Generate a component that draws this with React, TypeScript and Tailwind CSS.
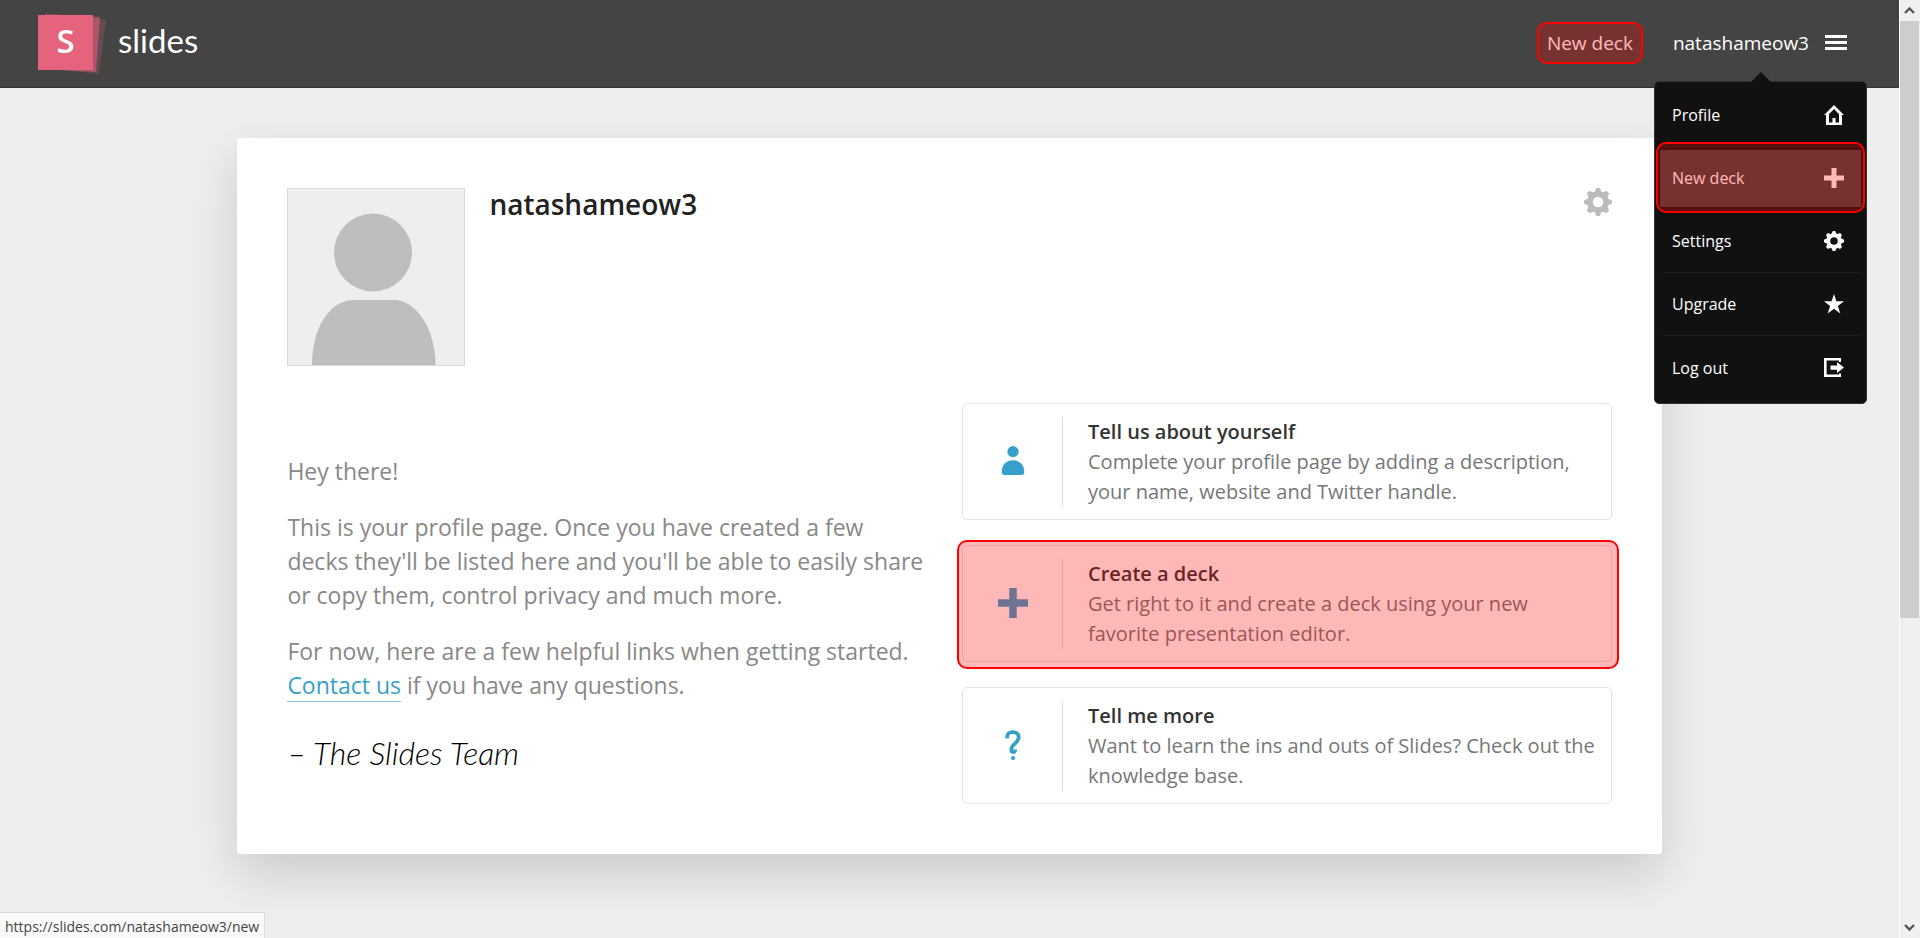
import React from 'react';

type IconProps = { className?: string };

const TEETH = [0, 45, 90, 135, 180, 225, 270, 315];

function Gear({ className }: IconProps) {
  return (
    <svg viewBox="0 0 28 28" className={className} fill="currentColor" aria-hidden="true">
      <circle cx="14" cy="14" r="8" fill="none" stroke="currentColor" strokeWidth="5.4" />
      {TEETH.map((a) => (
        <path key={a} d="M9.4 5.5 Q11.2 3.6 11.7 1.2 Q12 0 13 0 H15 Q16 0 16.3 1.2 Q16.8 3.6 18.6 5.5 Z" transform={`rotate(${a} 14 14)`} />
      ))}
    </svg>
  );
}

function Home({ className }: IconProps) {
  return (
    <svg viewBox="0 0 20 20" className={className} fill="currentColor" fillRule="evenodd" aria-hidden="true">
      <path d="M10 0 L20 10 H18 V20 H2 V10 H0 Z M10 4 L5 9 V17.5 H8.5 V13 H11.5 V17.5 H15 V9 Z" />
    </svg>
  );
}

function Plus({ className }: IconProps) {
  return (
    <svg viewBox="0 0 20 20" className={className} fill="currentColor" aria-hidden="true">
      <path d="M7.5 0 H12.5 V7.5 H20 V12.5 H12.5 V20 H7.5 V12.5 H0 V7.5 H7.5 Z" />
    </svg>
  );
}

function Star({ className }: IconProps) {
  return (
    <svg viewBox="0 0 20 20" className={className} fill="currentColor" aria-hidden="true">
      <path d="M10 0 L12.4 7.3 H20 L13.9 11.9 L16.3 19.4 L10 14.8 L3.7 19.4 L6.1 11.9 L0 7.3 H7.6 Z" />
    </svg>
  );
}

function Exit({ className }: IconProps) {
  return (
    <svg viewBox="0 0 20 20" className={className} fill="currentColor" aria-hidden="true">
      <path d="M0 0 H17 V4 H15 V2.6 H2.6 V16.6 H15 V15.5 H17 V19 H0 Z M6.5 7.4 H13 V4 L20 9.6 L13 15 V11.8 H6.5 Z" />
    </svg>
  );
}

function Person({ className }: IconProps) {
  return (
    <svg viewBox="0 0 32 32" className={className} fill="currentColor" aria-hidden="true">
      <circle cx="16" cy="6" r="6" />
      <path d="M4 27.5 C4 20 9 15.3 16 15.3 C23 15.3 28 20 28 27.5 Q28 31 25 31 H7 Q4 31 4 27.5 Z" />
    </svg>
  );
}

function Question({ className }: IconProps) {
  return (
    <svg viewBox="0 0 32 32" className={className} aria-hidden="true">
      <path
        d="M10 9 C9 4 12 2.2 16 2.2 C20.5 2.2 22.5 5.2 22 8.6 C21.2 14 14.6 15.4 14.2 20.4 C14 24.5 18.4 24.6 18.4 20.8"
        fill="none"
        stroke="currentColor"
        strokeWidth="4"
      />
      <circle cx="16" cy="29.8" r="2.2" fill="currentColor" />
    </svg>
  );
}

function Logo() {
  return (
    <a href="#home" className="flex items-center gap-3 text-white">
      <span className="relative flex h-14 w-[68px] items-center pb-1">
        <svg viewBox="0 0 68 60" className="absolute -top-px left-0 h-[60px] w-[68px]" fill="#e5637d" aria-hidden="true">
          <path d="M14 0 L68 6 L61 60 L7 54 Z" opacity="0.22" />
          <path d="M7 0 L62 3 L58 58 L3 55 Z" opacity="0.55" />
          <rect x="0" y="1" width="55" height="55" />
        </svg>
        <span className="relative w-[55px] text-center text-[33px] leading-none font-semibold">S</span>
      </span>
      <span className="pb-1 font-['Lato'] text-[33px] leading-none">slides</span>
    </a>
  );
}

function Highlight({ className }: IconProps) {
  return (
    <span
      aria-hidden="true"
      className={`pointer-events-none absolute rounded-[10px] border-2 border-[#ff0000] bg-[#ff0000]/28 ${className ?? ''}`}
    />
  );
}

const MENU = [
  { label: 'Profile', Icon: Home },
  { label: 'New deck', Icon: Plus, active: true },
  { label: 'Settings', Icon: Gear },
  { label: 'Upgrade', Icon: Star },
  { label: 'Log out', Icon: Exit },
];

function UserMenu() {
  return (
    <div className="absolute top-[53px] -right-5 z-10 w-[213px] rounded-[5px] border border-[#333] bg-[#111] px-[5px] pt-[2px] pb-1">
      <svg viewBox="0 0 20 10" className="absolute -top-[10px] left-1/2 h-[10px] w-5 -translate-x-1/2" fill="#111" aria-hidden="true">
        <path d="M10 0 L20 10 H0 Z" />
      </svg>
      <ul>
        {MENU.map(({ label, Icon, active }, i) => (
          <li key={label} className={`relative h-[63px] pt-[3px] pb-[2px] ${i < MENU.length - 1 ? 'border-b border-[#1c1c1c]' : ''}`}>
            <a
              href={`#${label}`}
              className={`flex h-full items-center justify-between pr-[17px] pl-3 text-[16px] text-white ${active ? 'bg-[#444]' : ''}`}
            >
              {label}
              <Icon className="size-5" />
            </a>
            {active && <Highlight className="-inset-x-1 -top-[5px] -bottom-1" />}
          </li>
        ))}
      </ul>
    </div>
  );
}

function Header() {
  return (
    <header className="flex h-[88px] shrink-0 items-center justify-between border-b border-[#333] bg-[#444] pr-[52px] pb-[2px] pl-[38px]">
      <Logo />
      <div className="flex items-center gap-10 text-[19px] leading-[30px] text-white">
        <a href="#new" className="relative">
          New deck
          <Highlight className="-inset-x-[10px] -inset-y-[6px]" />
        </a>
        <div className="relative">
          <button type="button" className="flex items-center gap-4">
            natashameow3
            <svg viewBox="0 0 22 15" className="h-[15px] w-[22px]" fill="currentColor" aria-hidden="true">
              <path d="M0 0 H22 V3 H0 Z M0 6 H22 V9 H0 Z M0 12 H22 V15 H0 Z" />
            </svg>
          </button>
          <UserMenu />
        </div>
      </div>
    </header>
  );
}

const STEPS = [
  {
    title: 'Tell us about yourself',
    text: 'Complete your profile page by adding a description, your name, website and Twitter handle.',
    Icon: Person,
  },
  {
    title: 'Create a deck',
    text: 'Get right to it and create a deck using your new favorite presentation editor.',
    Icon: Plus,
    active: true,
  },
  {
    title: 'Tell me more',
    text: 'Want to learn the ins and outs of Slides? Check out the knowledge base.',
    Icon: Question,
  },
];

function Profile() {
  return (
    <main className="mx-auto mt-[50px] w-3/4 rounded-[3px] bg-white p-[50px] shadow-[0_20px_50px_rgba(0,0,0,0.15)]">
      <div className="flex gap-6">
        <svg viewBox="0 0 176 176" className="size-[178px] border border-[#dadada] bg-[#eee]" fill="#bebebe" role="img" aria-label="Avatar">
          <circle cx="85" cy="63.5" r="39" />
          <path d="M24 176 C24 138 42 111 66 111 H106 C128 111 147.5 140 147.5 176 Z" />
        </svg>
        <h1 className="flex-1 text-[28px] leading-8 font-semibold text-[#222]">natashameow3</h1>
        <button type="button" aria-label="Profile settings" className="size-7 self-start text-[#bbb]">
          <Gear className="size-7" />
        </button>
      </div>
      <div className="mt-[37px] grid grid-cols-2 gap-[25px]">
        <div className="flex flex-col gap-[22px] pt-[51px] pr-[10px] text-[23px] leading-[34px] text-[#888]">
          <p>Hey there!</p>
          <p>
            This is your profile page. Once you have created a few decks they'll be listed here and you'll be able to
            easily share or copy them, control privacy and much more.
          </p>
          <p>
            For now, here are a few helpful links when getting started.{' '}
            <a href="#contact" className="border-b border-[#8cc6e0] text-[#35a1ca]">
              Contact us
            </a>{' '}
            if you have any questions.
          </p>
          <p className="mt-3 font-['Lato'] text-[32px] font-light text-black italic">– The Slides Team</p>
        </div>
        <ul className="flex flex-col gap-[25px] text-[20px] leading-[30px]">
          {STEPS.map(({ title, text, Icon, active }) => (
            <li key={title} className="relative">
              <a href={`#${title}`} className="flex rounded-[5px] border border-[#e4e4e4] pt-[13px] pb-3">
                <span className="flex w-[100px] shrink-0 items-center justify-center border-r border-[#ddd] pb-[2px] text-[#35a1ca]">
                  <Icon className="size-[30px]" />
                </span>
                <span className="flex-1 pl-[25px] pr-3">
                  <strong className="block font-semibold text-[#333]">{title}</strong>
                  <span className="block text-[#777]">{text}</span>
                </span>
              </a>
              {active && <Highlight className="-top-[5px] -right-[7px] -bottom-[7px] -left-[5px]" />}
            </li>
          ))}
        </ul>
      </div>
    </main>
  );
}

function Scrollbar() {
  return (
    <div aria-hidden="true" className="flex w-[21px] shrink-0 flex-col border-l border-white bg-[#f0f0f0] text-[#555]">
      <svg viewBox="0 0 20 21" className="h-[21px] w-5" fill="none" stroke="currentColor" strokeWidth="2.4">
        <path d="M5 13 L9.5 8.5 L14 13" />
      </svg>
      <div className="flex-1">
        <div className="mr-px h-2/3 bg-[#cdcdcd]" />
      </div>
      <svg viewBox="0 0 20 21" className="h-[21px] w-5" fill="none" stroke="currentColor" strokeWidth="2.4">
        <path d="M5 8 L9.5 12.5 L14 8" />
      </svg>
    </div>
  );
}

export default function App() {
  return (
    <div className="relative flex h-screen overflow-hidden bg-[#eee] font-['Open_Sans',sans-serif]">
      <div className="min-w-0 flex-1">
        <Header />
        <Profile />
      </div>
      <Scrollbar />
      <div className="absolute bottom-0 left-0 border-t border-r border-[#dcdcdc] bg-[#f9f9f9] px-[5px] pt-[3px] text-[14px] leading-[22px] text-[#444]">
        https://slides.com/natashameow3/new
      </div>
    </div>
  );
}
